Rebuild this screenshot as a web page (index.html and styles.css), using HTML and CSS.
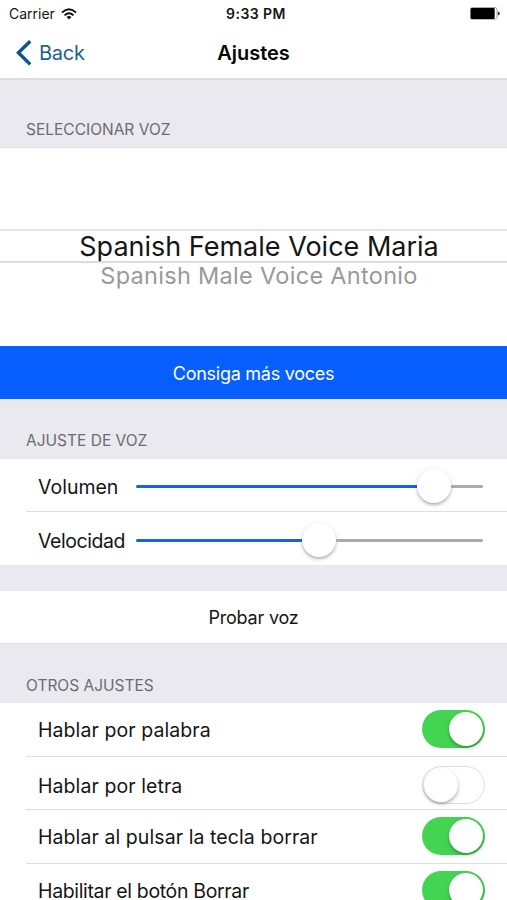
FILE: index.html
```html
<!DOCTYPE html>
<html lang="es">
<head>
<meta charset="utf-8">
<title>Ajustes</title>
<link rel="stylesheet" href="styles.css">
</head>
<body>
<header class="top">
  <div class="status">
    <div class="carrier"><span class="carrier-name">Carrier</span>
      <svg class="wifi" width="16" height="12" viewBox="0 0 16 12"><g fill="none" stroke="#111" stroke-width="1.9"><path d="M.9 4.6Q8-2 15.1 4.6"/><path d="M3.5 7.4Q8 3.3 12.5 7.4"/></g><path fill="#111" d="M5.5 9.1Q8 7 10.5 9.1L8 11.6z"/></svg>
    </div>
    <span class="time">9:33 PM</span>
    <svg class="battery" width="30" height="13" viewBox="0 0 30 13"><rect x=".5" y=".5" width="26.5" height="11.8" rx="2" fill="#fff" stroke="#aaa"/><rect x=".7" y=".9" width="24" height="11" rx="1" fill="#000"/><path d="M27.8 4.2Q29.8 5 29.8 6.4T27.8 8.6z" fill="#333"/></svg>
  </div>
  <nav class="nav">
    <a class="back"><svg width="16" height="26" viewBox="0 0 16 26"><path d="M14.2 1.2 2.4 12.8 14.2 24.4" fill="none" stroke="#075789" stroke-width="3.4"/></svg><span class="back-label">Back</span></a>
    <h1 class="title">Ajustes</h1>
  </nav>
</header>
<h2 class="section first"><span>SELECCIONAR VOZ</span></h2>
<div class="picker">
  <div class="selected"><span>Spanish Female Voice Maria</span></div>
  <div class="other"><span>Spanish Male Voice Antonio</span></div>
</div>
<button class="more"><span>Consiga más voces</span></button>
<h2 class="section second"><span>AJUSTE DE VOZ</span></h2>
<div class="group">
  <div class="row slider-row"><span class="label">Volumen</span><div class="slider"><i class="fill fill-volume"></i><i class="knob"></i><i class="rest"></i></div></div>
  <div class="row slider-row last"><span class="label speed">Velocidad</span><div class="slider"><i class="fill fill-speed"></i><i class="knob"></i><i class="rest"></i></div></div>
</div>
<button class="test"><span>Probar voz</span></button>
<h2 class="section third"><span>OTROS AJUSTES</span></h2>
<div class="group options">
  <div class="row"><span class="label wide">Hablar por palabra</span><i class="switch on"></i></div>
  <div class="row lower"><span class="label wide">Hablar por letra</span><i class="switch"></i></div>
  <div class="row"><span class="label wide">Hablar al pulsar la tecla borrar</span><i class="switch on"></i></div>
  <div class="row"><span class="label delete">Habilitar el botón Borrar</span><i class="switch on"></i></div>
</div>
</body>
</html>
```
FILE: styles.css
```css
* { box-sizing: border-box; }
html { height: 900px; overflow: hidden; }
body { margin: 0; height: 900px; overflow: hidden; background: #eae9ef; color: #151515; font-family: Inter, "Liberation Sans", sans-serif; }
span, h1 { white-space: nowrap; }
button { display: flex; align-items: center; justify-content: center; width: 100%; border: 0; padding: 0; font-family: inherit; }
.top { height: 80px; background: #fff; border-bottom: 2px solid #dddde0; }
.status { display: grid; grid-template-columns: 1fr auto 1fr; align-items: center; height: 27px; padding: 0 7px 0 9px; }
.carrier { display: flex; align-items: center; gap: 6px; }
.carrier-name { font-size: 14px; }
.time { font-size: 14px; font-weight: 600; letter-spacing: .45px; margin-left: 3px; }
.battery { justify-self: end; }
.nav { display: grid; grid-template-columns: 1fr auto 1fr; align-items: center; height: 51px; padding: 0 16px; }
.back { display: flex; align-items: center; gap: 7px; color: #1b6294; font-size: 20px; letter-spacing: -.25px; }
.title { margin: 0; font-size: 20px; font-weight: 600; color: #050505; }
.section { margin: 0; padding-left: 26px; display: flex; align-items: flex-end; font-size: 15.5px; font-weight: 400; color: #6c6b71; line-height: 20px; }
.first { height: 68px; padding-bottom: 7px; border-bottom: 1px solid #e0dfe4; }
.second { height: 60px; padding-bottom: 8px; }
.third { height: 60px; padding-bottom: 7px; border-top: 1px solid #dfdee3; }
.picker { height: 198px; padding-top: 81px; background: #fff; text-align: center; }
.selected { height: 34px; border-top: 2px solid #e4e4e4; border-bottom: 2px solid #dcdcdc; font-size: 27px; line-height: 31px; padding-left: 11px; }
.other { font-size: 23.5px; line-height: 26px; letter-spacing: .3px; color: #999; padding-left: 11px; }
.more { height: 53px; padding-top: 2px; background: #075fff; color: #fff; font-size: 18px; letter-spacing: -.27px; }
.group { background: #fff; }
.row { display: flex; align-items: center; height: 53.5px; margin-left: 26px; padding: 0 22px 0 12px; border-bottom: 1px solid #dededf; }
.label { font-size: 19.5px; }
.speed { letter-spacing: -.45px; }
.wide { letter-spacing: .08px; }
.delete { letter-spacing: -.35px; }
.slider-row { height: 53px; padding-top: 2px; padding-right: 24px; justify-content: space-between; }
.slider-row .label { padding-top: 1px; }
.last { height: 53px; padding-top: 3px; border: 0; }
.slider { width: 347px; display: flex; align-items: center; }
.fill { height: 3px; background: #1b62df; border-radius: 2px 0 0 2px; }
.fill-volume { width: 281px; }
.fill-speed { width: 166px; }
.knob { width: 34px; height: 34px; border-radius: 50%; background: #fff; box-shadow: 0 2px 3px #0004, 0 1px 8px #0001; }
.rest { flex: 1; height: 3px; background: #aaa; border-radius: 0 2px 2px 0; }
.test { height: 52px; margin-top: 26px; background: #fff; font-size: 18px; letter-spacing: -.22px; color: #151515; }
.options .row { justify-content: space-between; }
.options .label { padding-top: 2px; }
.lower > * { transform: translateY(2px); }
.switch { display: flex; align-items: center; width: 63px; height: 38px; border-radius: 19px; padding: 2px; border: 1.5px solid #dedede; }
.switch::before { content: ""; width: 34px; height: 34px; margin-left: -1px; border-radius: 50%; background: #fff; box-shadow: 0 2px 3px #0004, 0 2px 8px #0001; }
.on { justify-content: flex-end; border: 0; background: #43d551; }
```
